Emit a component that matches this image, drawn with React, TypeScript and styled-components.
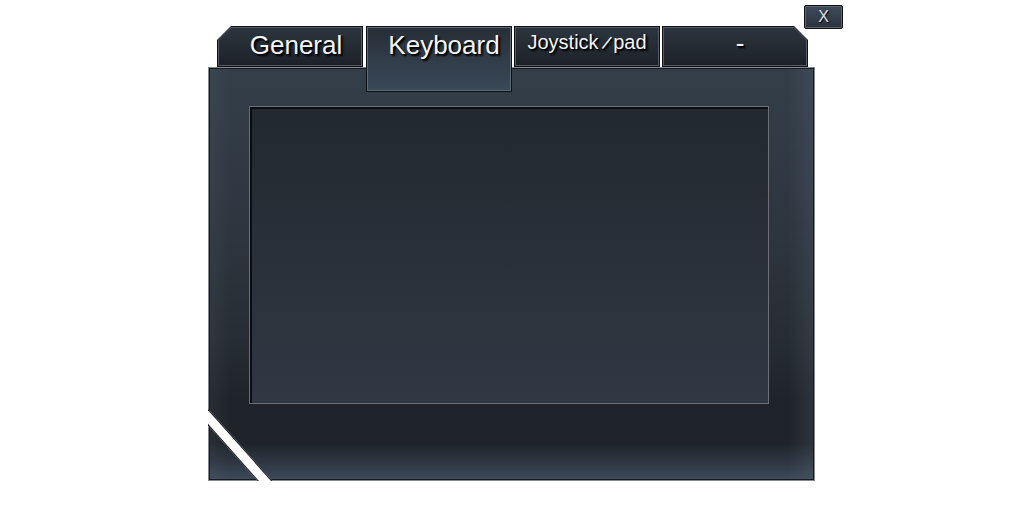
import React from 'react';
import styled, { createGlobalStyle, css } from 'styled-components';

type Cut = 'left' | 'right' | 'none';

const GlobalStyle = createGlobalStyle`
  html, body {
    margin: 0;
    padding: 0;
    background: #ffffff;
  }
  body {
    font-family: "Liberation Sans", Arial, "Noto Sans CJK JP", sans-serif;
  }
`;

const chamfer = (cut: Cut, size: number) => {
  if (cut === 'left') {
    return css`clip-path: polygon(${size}px 0, 100% 0, 100% 100%, 0 100%, 0 ${size}px);`;
  }
  if (cut === 'right') {
    return css`clip-path: polygon(0 0, calc(100% - ${size}px) 0, 100% ${size}px, 100% 100%, 0 100%);`;
  }
  return css``;
};

const Window = styled.div`
  position: relative;
  width: 635px;
  margin: 5px 0 0 208px;
  padding-top: 21px;
`;

const CloseButton = styled.button`
  position: absolute;
  top: 0;
  left: 596px;
  width: 39px;
  height: 24px;
  padding: 0;
  border: 1px solid #0d1013;
  border-radius: 2px;
  box-shadow: inset 0 0 0 1px #5d6670;
  background: linear-gradient(180deg, #3e4b5a 0%, #2b333d 100%);
  color: #dfe3e7;
  font-family: "Liberation Sans", Arial, sans-serif;
  font-size: 16px;
  line-height: 22px;
  text-shadow: 1px 1px 1px #000;
  cursor: pointer;
  z-index: 3;
`;

const TabBar = styled.div`
  position: relative;
  z-index: 2;
  display: flex;
  align-items: flex-start;
  gap: 2px;
  height: 41px;
  margin-left: 9px;
`;

const TabShell = styled.div<{ $active?: boolean; $cut: Cut }>`
  width: 146px;
  height: ${(p) => (p.$active ? 66 : 41)}px;
  padding: 1px;
  box-sizing: border-box;
  background: #0e1114;
  ${(p) => chamfer(p.$cut, 14)}

  &:first-child {
    margin-right: 1px;
  }
`;

const TabEdge = styled.div<{ $active?: boolean; $cut: Cut }>`
  height: 100%;
  padding: 1px;
  box-sizing: border-box;
  background: ${(p) => (p.$active ? '#5f6974' : '#535c66')};
  ${(p) => chamfer(p.$cut, 13)}
`;

const TabFace = styled.div<{ $active?: boolean; $cut: Cut; $size: number; $top: number; $shift: number }>`
  height: 100%;
  box-sizing: border-box;
  padding-top: ${(p) => p.$top}px;
  padding-left: ${(p) => Math.max(p.$shift, 0) * 2}px;
  padding-right: ${(p) => Math.max(-p.$shift, 0) * 2}px;
  text-align: center;
  color: #f4f5f6;
  font-size: ${(p) => p.$size}px;
  line-height: 1;
  white-space: nowrap;
  text-shadow: 2px 2px 2px #000, 1px 1px 1px #000;
  background: ${(p) =>
    p.$active
      ? 'linear-gradient(180deg, #262e37 0%, #303b47 45%, #3a4858 100%)'
      : 'linear-gradient(180deg, #2c343e 0%, #232a31 60%, #1c2127 100%)'};
  ${(p) => chamfer(p.$cut, 12)}
`;

const Slash = styled.span`
  display: inline-block;
  margin: 0 4px 0 5px;
  transform: translateY(1px) rotate(22deg) scaleY(0.95);
`;

const Panel = styled.div`
  position: relative;
  z-index: 1;
  width: 607px;
  height: 414px;
  box-sizing: border-box;
  padding: 38px 0 0 40px;
  border: 1px solid #85898e;
  box-shadow: inset 0 0 0 1px #171b20;
  clip-path: inset(0);
  background:
    linear-gradient(90deg, rgba(120, 135, 150, 0.1) 0, rgba(120, 135, 150, 0) 22px,
      rgba(120, 135, 150, 0) calc(100% - 26px), rgba(120, 135, 150, 0.16) 100%),
    linear-gradient(180deg, #343e49 0%, #2f3842 30%, #272d34 65%, #1f242a 80%,
      #1f242a 91%, #2e3844 96%, #3d4a5a 100%);

  &::after {
    content: '';
    position: absolute;
    left: 22px;
    top: 281px;
    width: 11px;
    height: 200px;
    box-sizing: border-box;
    background: #ffffff;
    border-left: 1px solid #12161a;
    border-right: 1px solid #12161a;
    transform: rotate(-41.7deg);
  }
`;

const Screen = styled.div`
  width: 520px;
  height: 298px;
  box-sizing: border-box;
  border: 1px solid #6c7076;
  box-shadow: inset 2px 2px 0 #0b0d10;
  background: linear-gradient(180deg, #22282f 0%, #293039 50%, #2f3843 100%);
`;

const tabs: {
  key: string;
  label: React.ReactNode;
  cut: Cut;
  active?: boolean;
  size: number;
  top: number;
  shift: number;
}[] = [
  { key: 'general', label: 'General', cut: 'left', size: 26, top: 4, shift: 6 },
  { key: 'keyboard', label: 'Keyboard', cut: 'none', active: true, size: 26, top: 4, shift: 5 },
  {
    key: 'joystick',
    label: (
      <>
        Joystick<Slash>/</Slash>pad
      </>
    ),
    cut: 'none',
    size: 20,
    top: 4,
    shift: 0,
  },
  { key: 'dash', label: '-', cut: 'right', size: 26, top: 2, shift: 5 },
];

const App = () => {
  return (
    <>
      <GlobalStyle />
      <Window>
        <CloseButton>X</CloseButton>
        <TabBar>
          {tabs.map((t) => (
            <TabShell key={t.key} $active={t.active} $cut={t.cut}>
              <TabEdge $active={t.active} $cut={t.cut}>
                <TabFace
                  $active={t.active}
                  $cut={t.cut}
                  $size={t.size}
                  $top={t.top}
                  $shift={t.shift}
                >
                  {t.label}
                </TabFace>
              </TabEdge>
            </TabShell>
          ))}
        </TabBar>
        <Panel>
          <Screen />
        </Panel>
      </Window>
    </>
  );
};

export default App;
